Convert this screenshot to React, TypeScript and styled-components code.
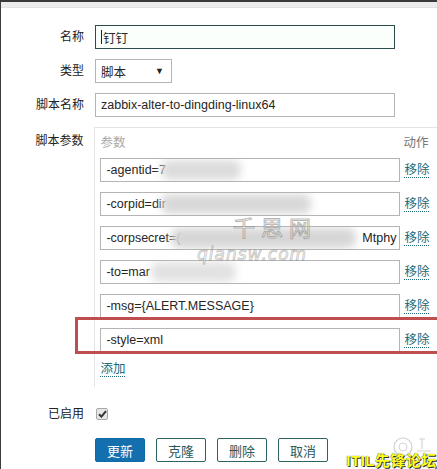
import React from "react";
import styled, { createGlobalStyle } from "styled-components";

const Global = createGlobalStyle`
  html, body { margin: 0; padding: 0; background: #fff; overflow: hidden; }
  body { font-family: "Liberation Sans", "Noto Sans CJK SC", Arial, sans-serif; color: #1f1f1f; }
`;

const Page = styled.div`
  position: relative;
  width: 437px;
  height: 469px;
  box-sizing: border-box;
  border-left: 1px solid #3c3c3c;
  border-top: 2px solid #3a3a3a;
  overflow: hidden;
  background: #fff;
`;

const TopStrip = styled.div`
  height: 5px;
  background: #ececec;
  border-bottom: 1px solid #e2e2e2;
`;

const Form = styled.div`
  display: flex;
  flex-direction: column;
  padding-top: 17px;
`;

const Row = styled.div<{ $mt?: number; $align?: string }>`
  display: flex;
  align-items: ${(p) => p.$align || "center"};
  gap: 11px;
  margin-top: ${(p) => p.$mt ?? 0}px;
`;

const Label = styled.div<{ $pt?: number }>`
  width: 83px;
  text-align: right;
  font-size: 12px;
  line-height: 14px;
  padding-top: ${(p) => p.$pt ?? 0}px;
  color: #222;
`;

const TextInput = styled.div<{ $w?: number; $focus?: boolean }>`
  position: relative;
  box-sizing: border-box;
  width: ${(p) => p.$w ?? 300}px;
  height: 24px;
  border: 1px solid ${(p) => (p.$focus ? "#2c4b4b" : "#b4b4b4")};
  background: ${(p) => (p.$focus ? "#fbfffc" : "#fff")};
  padding: 0 5px;
  display: flex;
  align-items: center;
  font-size: 12.5px;
  color: #262626;
  white-space: nowrap;
  overflow: hidden;
`;

const Caret = styled.span`
  display: inline-block;
  width: 1px;
  height: 14px;
  background: #222;
  margin-right: 1px;
`;

const Select = styled(TextInput)`
  justify-content: space-between;
  font-size: 12.5px;
`;

const Arrow = styled.span`
  font-size: 9px;
  color: #222;
  margin-right: 2px;
`;

const ParamBox = styled.div`
  width: 345px;
  box-sizing: border-box;
  border-top: 1px solid #e4e4e4;
  border-left: 1px solid #e4e4e4;
  padding: 6px 0 11px 5px;
  display: flex;
  flex-direction: column;
  gap: 10px;
`;

const HeaderRow = styled.div`
  display: flex;
  align-items: center;
  height: 14px;
  font-size: 12.5px;
  color: #a8a8a8;
`;

const HeaderParam = styled.div`
  width: 303px;
`;

const HeaderAction = styled.div`
  color: #777;
`;

const ParamRow = styled.div`
  display: flex;
  align-items: center;
  gap: 4px;
`;

const LinkText = styled.span`
  font-size: 12.5px;
  line-height: 14px;
  color: #1d6a78;
  border-bottom: 1px dotted #1d6a78;
  align-self: center;
`;

const AddRow = styled.div`
  height: 14px;
  display: flex;
  align-items: center;
`;

const Blur = styled.div<{ $l: number; $w: number; $tone?: string }>`
  position: absolute;
  top: 1px;
  bottom: 1px;
  left: ${(p) => p.$l}px;
  width: ${(p) => p.$w}px;
  background: ${(p) => p.$tone || "#dcdcdc"};
  filter: blur(4px);
  border-radius: 8px;
`;

const TailText = styled.span`
  position: absolute;
  right: 3px;
  top: 50%;
  transform: translateY(-50%);
  font-size: 12.5px;
  color: #222;
`;

const CheckBox = styled.span`
  box-sizing: border-box;
  width: 12px;
  height: 12px;
  border: 1px solid #a8a8a8;
  background: #e6e6e6;
  border-radius: 2px;
  display: flex;
  align-items: center;
  justify-content: center;
  margin-left: 1px;
`;

const Buttons = styled.div`
  display: flex;
  gap: 11px;
`;

const Button = styled.div<{ $primary?: boolean }>`
  box-sizing: border-box;
  width: 50px;
  height: 24px;
  display: flex;
  align-items: center;
  justify-content: center;
  font-size: 13px;
  border-radius: 2px;
  border: 1px solid ${(p) => (p.$primary ? "#0f6aa8" : "#2f6363")};
  background: ${(p) => (p.$primary ? "#146fae" : "#fff")};
  color: ${(p) => (p.$primary ? "#fff" : "#2a5a5a")};
`;

const Highlight = styled.div`
  position: absolute;
  left: 74px;
  top: 315px;
  width: 380px;
  height: 37px;
  box-sizing: border-box;
  border: 3px solid #bf4f4e;
  pointer-events: none;
`;

const WaterCn = styled.div`
  position: absolute;
  left: 232px;
  top: 212px;
  font-size: 22px;
  line-height: 24px;
  letter-spacing: 6px;
  color: rgba(255, 255, 255, 0.6);
  -webkit-text-stroke: 1px rgba(120, 120, 120, 0.55);
  font-family: "Noto Sans CJK SC", sans-serif;
  pointer-events: none;
`;

const WaterEn = styled.div`
  position: absolute;
  left: 196px;
  top: 243px;
  font-size: 17px;
  line-height: 18px;
  font-style: italic;
  letter-spacing: 1px;
  color: rgba(255, 255, 255, 0.5);
  -webkit-text-stroke: 0.8px rgba(130, 130, 130, 0.5);
  font-family: "DejaVu Sans", sans-serif;
  pointer-events: none;
`;

const Brand = styled.div`
  position: absolute;
  right: 0;
  bottom: 0;
  font-size: 15px;
  line-height: 17px;
  font-weight: bold;
  color: #ffff20;
  letter-spacing: 0.5px;
  text-shadow: 0 0 1px #222, 1px 1px 0 #333;
  font-family: "Liberation Sans", "Noto Sans CJK SC", sans-serif;
  white-space: nowrap;
`;

const Badge = styled.svg`
  position: absolute;
  right: 2px;
  bottom: 10px;
`;

type Param = {
  text: string;
  blurs?: { l: number; w: number; tone?: string }[];
  tail?: string;
};

const params: Param[] = [
  { text: "-agentid=7", blurs: [{ l: 60, w: 80 }] },
  { text: "-corpid=dir", blurs: [{ l: 60, w: 150, tone: "#d8d8d8" }] },
  { text: "-corpsecret=(", blurs: [{ l: 70, w: 185, tone: "#d6d6d6" }], tail: "Mtphy" },
  { text: "-to=mar", blurs: [{ l: 50, w: 85, tone: "#e2e2e2" }] },
  { text: "-msg={ALERT.MESSAGE}" },
  { text: "-style=xml" },
];

export default function App() {
  return (
    <Page>
      <Global />
      <TopStrip />
      <Form>
        <Row>
          <Label>名称</Label>
          <TextInput $focus>
            <Caret />
            钉钉
          </TextInput>
        </Row>
        <Row $mt={10}>
          <Label>类型</Label>
          <Select $w={77}>
            <span>脚本</span>
            <Arrow>▼</Arrow>
          </Select>
        </Row>
        <Row $mt={10}>
          <Label>脚本名称</Label>
          <TextInput>zabbix-alter-to-dingding-linux64</TextInput>
        </Row>
        <Row $mt={10} $align="flex-start">
          <Label $pt={7}>脚本参数</Label>
          <ParamBox>
            <HeaderRow>
              <HeaderParam>参数</HeaderParam>
              <HeaderAction>动作</HeaderAction>
            </HeaderRow>
            {params.map((p, i) => (
              <ParamRow key={i}>
                <TextInput>
                  {p.text}
                  {p.blurs?.map((b, j) => (
                    <Blur key={j} $l={b.l} $w={b.w} $tone={b.tone} />
                  ))}
                  {p.tail && <TailText>{p.tail}</TailText>}
                </TextInput>
                <LinkText>移除</LinkText>
              </ParamRow>
            ))}
            <AddRow>
              <LinkText>添加</LinkText>
            </AddRow>
          </ParamBox>
        </Row>
        <Row $mt={20}>
          <Label>已启用</Label>
          <CheckBox>
            <svg width="9" height="8" viewBox="0 0 9 8">
              <path d="M1 4.2 L3.4 6.6 L8 1.2" stroke="#333" strokeWidth="2" fill="none" />
            </svg>
          </CheckBox>
        </Row>
        <Row $mt={17}>
          <Label />
          <Buttons>
            <Button $primary>更新</Button>
            <Button>克隆</Button>
            <Button>删除</Button>
            <Button>取消</Button>
          </Buttons>
        </Row>
      </Form>
      <Highlight />
      <WaterCn>千思网</WaterCn>
      <WaterEn>qiansw.com</WaterEn>
      <Badge width="44" height="24" viewBox="0 0 44 24">
        <circle cx="12" cy="12" r="9" fill="none" stroke="#cfcfcf" strokeWidth="1.2" />
        <circle cx="12" cy="12" r="4" fill="none" stroke="#d6d6d6" strokeWidth="1" />
        <path d="M28 4 L34 4 M31 4 L31 14 M26 16 L40 16" stroke="#d4d4d4" strokeWidth="1.2" fill="none" />
      </Badge>
      <Brand>ITIL先锋论坛</Brand>
    </Page>
  );
}
